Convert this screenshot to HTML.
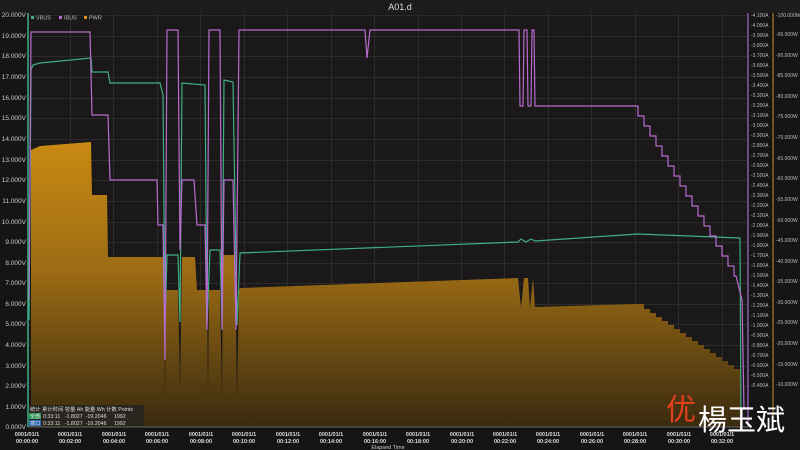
<!DOCTYPE html>
<html><head><meta charset="utf-8"><style>
html,body{margin:0;padding:0;background:#151515;width:800px;height:450px;overflow:hidden}
svg{display:block}
text{font-family:"Liberation Sans","Noto Sans CJK SC",sans-serif}
</style></head><body>
<svg width="800" height="450" viewBox="0 0 800 450" xmlns="http://www.w3.org/2000/svg">
<defs>
<linearGradient id="og" x1="0" y1="0" x2="0" y2="1">
<stop offset="0" stop-color="#c98a12"/><stop offset="0.45" stop-color="#9c6c14"/><stop offset="1" stop-color="#3a2a10"/>
</linearGradient>
</defs>
<rect width="800" height="450" fill="#151515"/>
<rect x="0" y="0" width="800" height="13" fill="#1c1c1c"/>
<text x="400" y="10" fill="#ddd" font-size="9" text-anchor="middle">A01.d</text>
<rect x="28" y="13" width="720" height="414" fill="#1a1818"/>
<g stroke="#2e2c2a" stroke-width="1">
<path d="M28 15.5H748M28 36.5H748M28 56.5H748M28 77.5H748M28 98.5H748M28 118.5H748M28 139.5H748M28 160.5H748M28 180.5H748M28 201.5H748M28 222.5H748M28 242.5H748M28 263.5H748M28 283.5H748M28 304.5H748M28 324.5H748M28 345.5H748M28 366.5H748M28 386.5H748M28 407.5H748"/>
<path d="M70.5 13V427M113.5 13V427M157.5 13V427M200.5 13V427M244.5 13V427M287.5 13V427M331.5 13V427M374.5 13V427M418.5 13V427M461.5 13V427M504.5 13V427M548.5 13V427M591.5 13V427M635.5 13V427M678.5 13V427M722.5 13V427"/>
</g>
<path fill="url(#og)" d="M31 427L31 150L40 146L91 142L92 195L107 195L108 257L163 257L164 290L165 400L166 290L178 290L180 390L182 257L195 257L197 290L207 290L208 400L209 290L220 290L222 400L223 255L235 255L237 400L239 290L240 288L518 278L521 308L524 278L528 278L530 308L533 278L535 307L638 304h6v5h6v4h6v4h6v4h6v4h6v4h6v4h6v4h6v4h6v4h6v4h6v4h6v4h6v4h6v4h6v4h6v4L742 427Z"/>
<path fill="none" stroke="#3fae84" stroke-width="1.2" d="M29 320L31 70L33 65L40 63L91 58L92 72L108 72L110 83L160 83L163 95L165 325L167 255L178 255L180 322L182 83L205 85L207 325L210 250L220 250L222 322L224 80L233 82L237 325L240 253L518 242L521 239L526 242L531 239L535 241L638 234L740 238L741 420"/>
<path fill="none" stroke="#b86cd0" stroke-width="1.2" d="M29 300L31 32L90 32L92 115L108 115L110 180L157 180L158 225L163 225L165 360L167 30L178 30L180 250L182 180L194 180L197 225L205 225L207 330L209 30L220 30L222 330L224 180L233 180L236 330L239 30L365 30L367 58L370 30L519 30L520 106L523 106L524 30L527 30L528 106L531 106L532 30L534 30L535 106L638 106v10h6v10h6v10h6v10h6v10h6v10h6v10h6v10h6v10h6v10h6v10h6v10h6v10h6v10h6v10h6v10h6v10h2L742 300L744 410"/>
<line x1="28" y1="13" x2="28" y2="427" stroke="#3fae84" stroke-width="1.5"/>
<line x1="748" y1="13" x2="748" y2="427" stroke="#8a58a8" stroke-width="1.5"/>
<line x1="773" y1="13" x2="773" y2="427" stroke="#8a6a2a" stroke-width="1.5"/>
<line x1="28" y1="427" x2="748" y2="427" stroke="#666" stroke-width="1"/>
<g font-size="5.5" fill="#bbb">
<rect x="31" y="16" width="3" height="3" fill="#3fae84"/><text x="36" y="19.5">VBUS</text>
<rect x="59" y="16" width="3" height="3" fill="#b86cd0"/><text x="64" y="19.5">IBUS</text>
<rect x="84" y="16" width="3" height="3" fill="#d4961c"/><text x="89" y="19.5">PWR</text>
</g>
<g font-size="6.5" fill="#ccc" text-anchor="end">
<text x="26" y="17">20.000V</text><text x="26" y="38">19.000V</text><text x="26" y="58">18.000V</text><text x="26" y="79">17.000V</text><text x="26" y="100">16.000V</text><text x="26" y="120">15.000V</text><text x="26" y="141">14.000V</text><text x="26" y="162">13.000V</text><text x="26" y="182">12.000V</text><text x="26" y="203">11.000V</text><text x="26" y="224">10.000V</text><text x="26" y="244">9.000V</text><text x="26" y="265">8.000V</text><text x="26" y="285">7.000V</text><text x="26" y="306">6.000V</text><text x="26" y="326">5.000V</text><text x="26" y="347">4.000V</text><text x="26" y="368">3.000V</text><text x="26" y="388">2.000V</text><text x="26" y="409">1.000V</text><text x="26" y="429">0.000V</text>
</g>
<g font-size="5" fill="#bbb">
<text x="751" y="17">-4.100A</text><text x="751" y="27">-4.000A</text><text x="751" y="37">-3.900A</text><text x="751" y="47">-3.800A</text><text x="751" y="57">-3.700A</text><text x="751" y="67">-3.600A</text><text x="751" y="77">-3.500A</text><text x="751" y="87">-3.400A</text><text x="751" y="97">-3.300A</text><text x="751" y="107">-3.200A</text><text x="751" y="117">-3.100A</text><text x="751" y="127">-3.000A</text><text x="751" y="137">-2.900A</text><text x="751" y="147">-2.800A</text><text x="751" y="157">-2.700A</text><text x="751" y="167">-2.600A</text><text x="751" y="177">-2.500A</text><text x="751" y="187">-2.400A</text><text x="751" y="197">-2.300A</text><text x="751" y="207">-2.200A</text><text x="751" y="217">-2.100A</text><text x="751" y="227">-2.000A</text><text x="751" y="237">-1.900A</text><text x="751" y="247">-1.800A</text><text x="751" y="257">-1.700A</text><text x="751" y="267">-1.600A</text><text x="751" y="277">-1.500A</text><text x="751" y="287">-1.400A</text><text x="751" y="297">-1.300A</text><text x="751" y="307">-1.200A</text><text x="751" y="317">-1.100A</text><text x="751" y="327">-1.000A</text><text x="751" y="337">-0.900A</text><text x="751" y="347">-0.800A</text><text x="751" y="357">-0.700A</text><text x="751" y="367">-0.600A</text><text x="751" y="377">-0.500A</text><text x="751" y="387">-0.400A</text>
</g>
<g font-size="5" fill="#bbb">
<text x="776" y="17">-100.000W</text><text x="776" y="36">-95.000W</text><text x="776" y="57">-90.000W</text><text x="776" y="77">-85.000W</text><text x="776" y="98">-80.000W</text><text x="776" y="118">-75.000W</text><text x="776" y="139">-70.000W</text><text x="776" y="160">-65.000W</text><text x="776" y="180">-60.000W</text><text x="776" y="201">-55.000W</text><text x="776" y="222">-50.000W</text><text x="776" y="242">-45.000W</text><text x="776" y="263">-40.000W</text><text x="776" y="283">-35.000W</text><text x="776" y="304">-30.000W</text><text x="776" y="324">-25.000W</text><text x="776" y="345">-20.000W</text><text x="776" y="366">-15.000W</text><text x="776" y="386">-10.000W</text>
</g>
<g font-size="5.5" fill="#ddd" text-anchor="middle" font-weight="bold">
<text x="27" y="436">0001/01/1</text><text x="27" y="443">00:00:00</text>
<text x="70" y="436">0001/01/1</text><text x="70" y="443">00:02:00</text>
<text x="114" y="436">0001/01/1</text><text x="114" y="443">00:04:00</text>
<text x="157" y="436">0001/01/1</text><text x="157" y="443">00:06:00</text>
<text x="201" y="436">0001/01/1</text><text x="201" y="443">00:08:00</text>
<text x="244" y="436">0001/01/1</text><text x="244" y="443">00:10:00</text>
<text x="288" y="436">0001/01/1</text><text x="288" y="443">00:12:00</text>
<text x="331" y="436">0001/01/1</text><text x="331" y="443">00:14:00</text>
<text x="375" y="436">0001/01/1</text><text x="375" y="443">00:16:00</text>
<text x="418" y="436">0001/01/1</text><text x="418" y="443">00:18:00</text>
<text x="462" y="436">0001/01/1</text><text x="462" y="443">00:20:00</text>
<text x="505" y="436">0001/01/1</text><text x="505" y="443">00:22:00</text>
<text x="548" y="436">0001/01/1</text><text x="548" y="443">00:24:00</text>
<text x="592" y="436">0001/01/1</text><text x="592" y="443">00:26:00</text>
<text x="635" y="436">0001/01/1</text><text x="635" y="443">00:28:00</text>
<text x="679" y="436">0001/01/1</text><text x="679" y="443">00:30:00</text>
<text x="722" y="436">0001/01/1</text><text x="722" y="443">00:32:00</text>
</g>
<text x="388" y="449" font-size="5.5" fill="#ccc" text-anchor="middle">Elapsed Time</text>
<g font-size="5.3" fill="#ddd">
<rect x="29" y="405" width="115" height="21" fill="#262422" opacity="0.85"/>
<text x="30" y="411">统计 累计时间 容量 Ah 能量 Wh 计数 Points</text>
<rect x="29" y="413" width="12" height="6" fill="#2f9a5a"/>
<text x="30" y="418">全部</text><text x="43" y="418">0:33:11 &#160; -1.8027 &#160;-19.2046 &#160;&#160;&#160; 1992</text>
<rect x="29" y="420" width="12" height="6" fill="#2a6ab8"/>
<text x="30" y="425">窗口</text><text x="43" y="425">0:33:11 &#160; -1.8027 &#160;-19.2046 &#160;&#160;&#160; 1992</text>
</g>
<text x="666" y="420" font-size="30" fill="#e0401c" font-family="'Noto Sans CJK SC',sans-serif">优</text>
<text x="698" y="430" font-size="29" fill="#ffffff" font-family="'Noto Sans CJK TC',sans-serif">楊玉斌</text>
</svg>
</body></html>
